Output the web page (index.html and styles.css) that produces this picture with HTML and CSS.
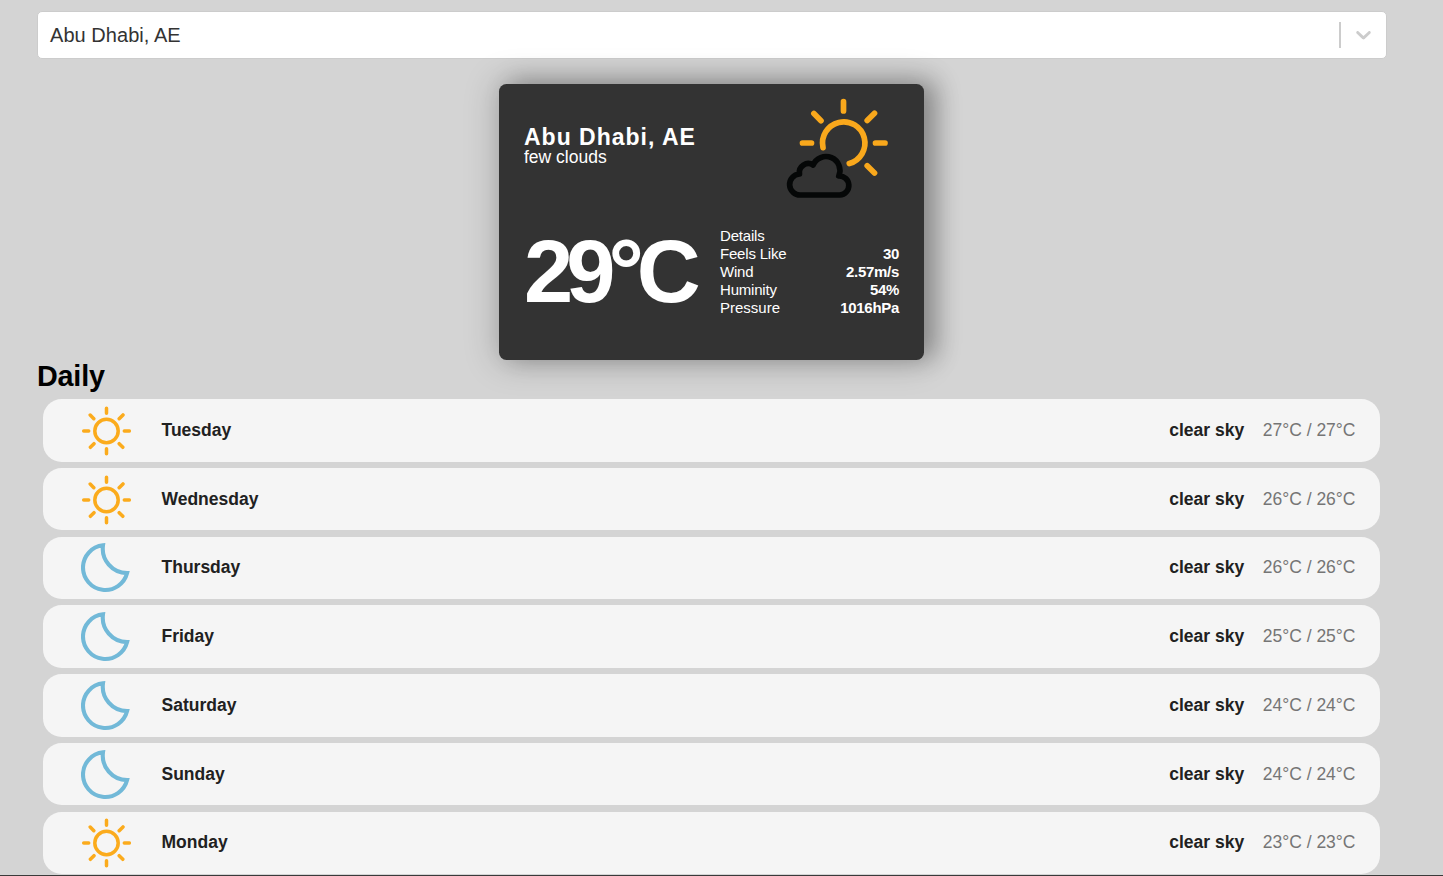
FILE: index.html
```html
<!DOCTYPE html>
<html lang="en">
<head>
<meta charset="utf-8">
<title>Weather</title>
<link rel="stylesheet" href="styles.css">
</head>
<body>
<svg class="defs" width="0" height="0">
  <symbol id="sun" viewBox="-25.5 -25 50 50">
    <g fill="none" stroke="#fbab1c" stroke-width="3.5" stroke-linecap="round">
      <circle r="11.7"/>
      <path d="M0-22.8V-17.8M0 17.8V22.8M-22.8 0H-17.8M17.8 0H22.8M12.7-12.3L16.5-16.1M-12.7-12.3L-16.3-15.9M12.7 12.7L16.3 16.3M-12.5 12.7L-16.1 16.3"/>
    </g>
  </symbol>
  <symbol id="moon" viewBox="-24.5 -24.7 50 50">
    <path d="M-2.5-22.4A22.4 22.4 0 1 0 21.6 5.4A24.5 24.5 0 0 1 -2.5-22.4Z" fill="none" stroke="#72b9d8" stroke-width="4.1"/>
  </symbol>
</svg>
<main class="page">
  <div class="select">
    <span class="select-value">Abu Dhabi, AE</span>
    <span class="select-separator"></span>
    <svg class="select-arrow" viewBox="0 0 20 20"><path d="M4.516 7.548c0.436-0.446 1.043-0.481 1.576 0l3.908 3.747 3.908-3.747c0.533-0.481 1.141-0.446 1.574 0 0.436 0.445 0.408 1.197 0 1.615-0.406 0.418-4.695 4.502-4.695 4.502-0.217 0.223-0.502 0.335-0.787 0.335s-0.57-0.112-0.789-0.335c0 0-4.287-4.084-4.695-4.502s-0.436-1.17 0-1.615z"/></svg>
  </div>
  <section class="weather">
    <div class="weather-top">
      <div class="place">
        <p class="city">Abu Dhabi, AE</p>
        <p class="description">few clouds</p>
      </div>
      <svg class="weather-icon" viewBox="784.5 97 105 104" fill="none" stroke-linecap="round">
        <g transform="translate(843 143)" stroke="#f9a81c" stroke-width="5.7">
          <path d="M-20.5 4.6A21.2 21.2 0 1 1 5.8 20.5M0-41.3V-32M-41-0H-32M32 0H41.5M23.7-22.5L31-29.8M-22.5-22.3L-29.6-29.4M23.7 22.8L31 30"/>
        </g>
        <path transform="translate(770.3 70) scale(.33333)" stroke="#050707" stroke-width="17" stroke-linejoin="round" d="M90 375A31 31 0 0 1 86 312A27 27 0 0 1 127 285A41.5 41.5 0 0 1 204 318A28.5 28.5 0 1 1 207 375Z"/>
      </svg>
    </div>
    <div class="weather-bottom">
      <p class="temperature">29°C</p>
      <dl class="details">
        <div class="detail"><dt>Details</dt></div>
        <div class="detail"><dt>Feels Like</dt><dd>30</dd></div>
        <div class="detail"><dt>Wind</dt><dd>2.57m/s</dd></div>
        <div class="detail"><dt>Huminity</dt><dd>54%</dd></div>
        <div class="detail"><dt>Pressure</dt><dd>1016hPa</dd></div>
      </dl>
    </div>
  </section>
  <h2 class="title">Daily</h2>
  <ul class="daily">
    <li class="day"><svg class="day-icon"><use href="#sun"/></svg><span class="day-name">Tuesday</span><span class="day-sky">clear sky</span><span class="day-temp">27°C / 27°C</span></li>
    <li class="day"><svg class="day-icon"><use href="#sun"/></svg><span class="day-name">Wednesday</span><span class="day-sky">clear sky</span><span class="day-temp">26°C / 26°C</span></li>
    <li class="day"><svg class="day-icon"><use href="#moon"/></svg><span class="day-name">Thursday</span><span class="day-sky">clear sky</span><span class="day-temp">26°C / 26°C</span></li>
    <li class="day"><svg class="day-icon"><use href="#moon"/></svg><span class="day-name">Friday</span><span class="day-sky">clear sky</span><span class="day-temp">25°C / 25°C</span></li>
    <li class="day"><svg class="day-icon"><use href="#moon"/></svg><span class="day-name">Saturday</span><span class="day-sky">clear sky</span><span class="day-temp">24°C / 24°C</span></li>
    <li class="day"><svg class="day-icon"><use href="#moon"/></svg><span class="day-name">Sunday</span><span class="day-sky">clear sky</span><span class="day-temp">24°C / 24°C</span></li>
    <li class="day"><svg class="day-icon"><use href="#sun"/></svg><span class="day-name">Monday</span><span class="day-sky">clear sky</span><span class="day-temp">23°C / 23°C</span></li>
  </ul>
</main>
</body>
</html>
```
FILE: styles.css
```css
* { box-sizing: border-box; margin: 0; padding: 0; }
body {
  font-family: "Liberation Sans", Arial, sans-serif;
  background: #d4d4d4;
}
.defs { display: block; }
.page {
  height: 876px;
  padding: 11px 56px 0 37px;
  border-bottom: 1px solid #3a3a3a;
  overflow: hidden;
}
.select {
  display: flex;
  align-items: center;
  height: 48px;
  padding: 0 10px 0 12px;
  background: #fff;
  border: 1px solid #ccc;
  border-radius: 5px;
}
.select-value { flex: 1; font-size: 20px; line-height: 22px; letter-spacing: .05px; color: #333; }
.select-separator { width: 2px; height: 26px; margin-right: 10px; background: #ccc; }
.select-arrow { width: 25px; height: 25px; margin-bottom: 1px; fill: #ccc; }
.weather {
  width: 425px;
  height: 276px;
  margin: 25px 0 0 462px;
  padding: 0 25px;
  color: #fff;
  background: #333;
  border-radius: 7.5px;
  box-shadow: 12.5px -2.5px 25px 0 rgba(0, 0, 0, .27), 0 0 32px 5px rgba(0, 0, 0, .17);
}
.weather-top {
  display: flex;
  justify-content: space-between;
  align-items: center;
  height: 126px;
  padding-top: 4px;
}
.place { padding-bottom: 6px; }
.city {
  font-size: 23px;
  font-weight: 700;
  line-height: 22px;
  letter-spacing: 1px;
}
.description { font-size: 17.5px; line-height: 18px; }
.weather-icon { width: 105px; height: 104px; margin-right: 9px; }
.weather-bottom {
  display: flex;
  justify-content: space-between;
  align-items: center;
  height: 124px;
}
.temperature {
  width: 170.5px;
  padding-bottom: 1px;
  font-size: 88.5px;
  font-weight: 700;
  line-height: 88px;
  letter-spacing: -7px;
  white-space: nowrap;
}
.details { width: 179px; font-size: 15px; line-height: 18px; }
.detail { display: flex; justify-content: space-between; }
.detail dt { letter-spacing: -.2px; }
.detail:last-child dt { letter-spacing: 0; }
.detail dd { font-weight: 700; letter-spacing: -.3px; }
.title { height: 39px; font-size: 28.75px; line-height: 33px; letter-spacing: -.2px; }
.daily {
  display: flex;
  flex-direction: column;
  gap: 6.25px;
  padding: 0 7px 0 6px;
  list-style: none;
}
.day {
  display: flex;
  align-items: center;
  flex: none;
  height: 62.5px;
  padding: 0 24.5px 0 37.5px;
  font-size: 17.5px;
  color: #212121;
  background: #f5f5f5;
  border-radius: 18.75px;
}
.day-icon { width: 50px; height: 50px; margin: 1px 31px 0 0; }
.day-name { flex: 1; font-weight: 700; }
.day-sky { margin-right: 18.5px; font-weight: 700; }
.day-temp { color: #757575; }
```
